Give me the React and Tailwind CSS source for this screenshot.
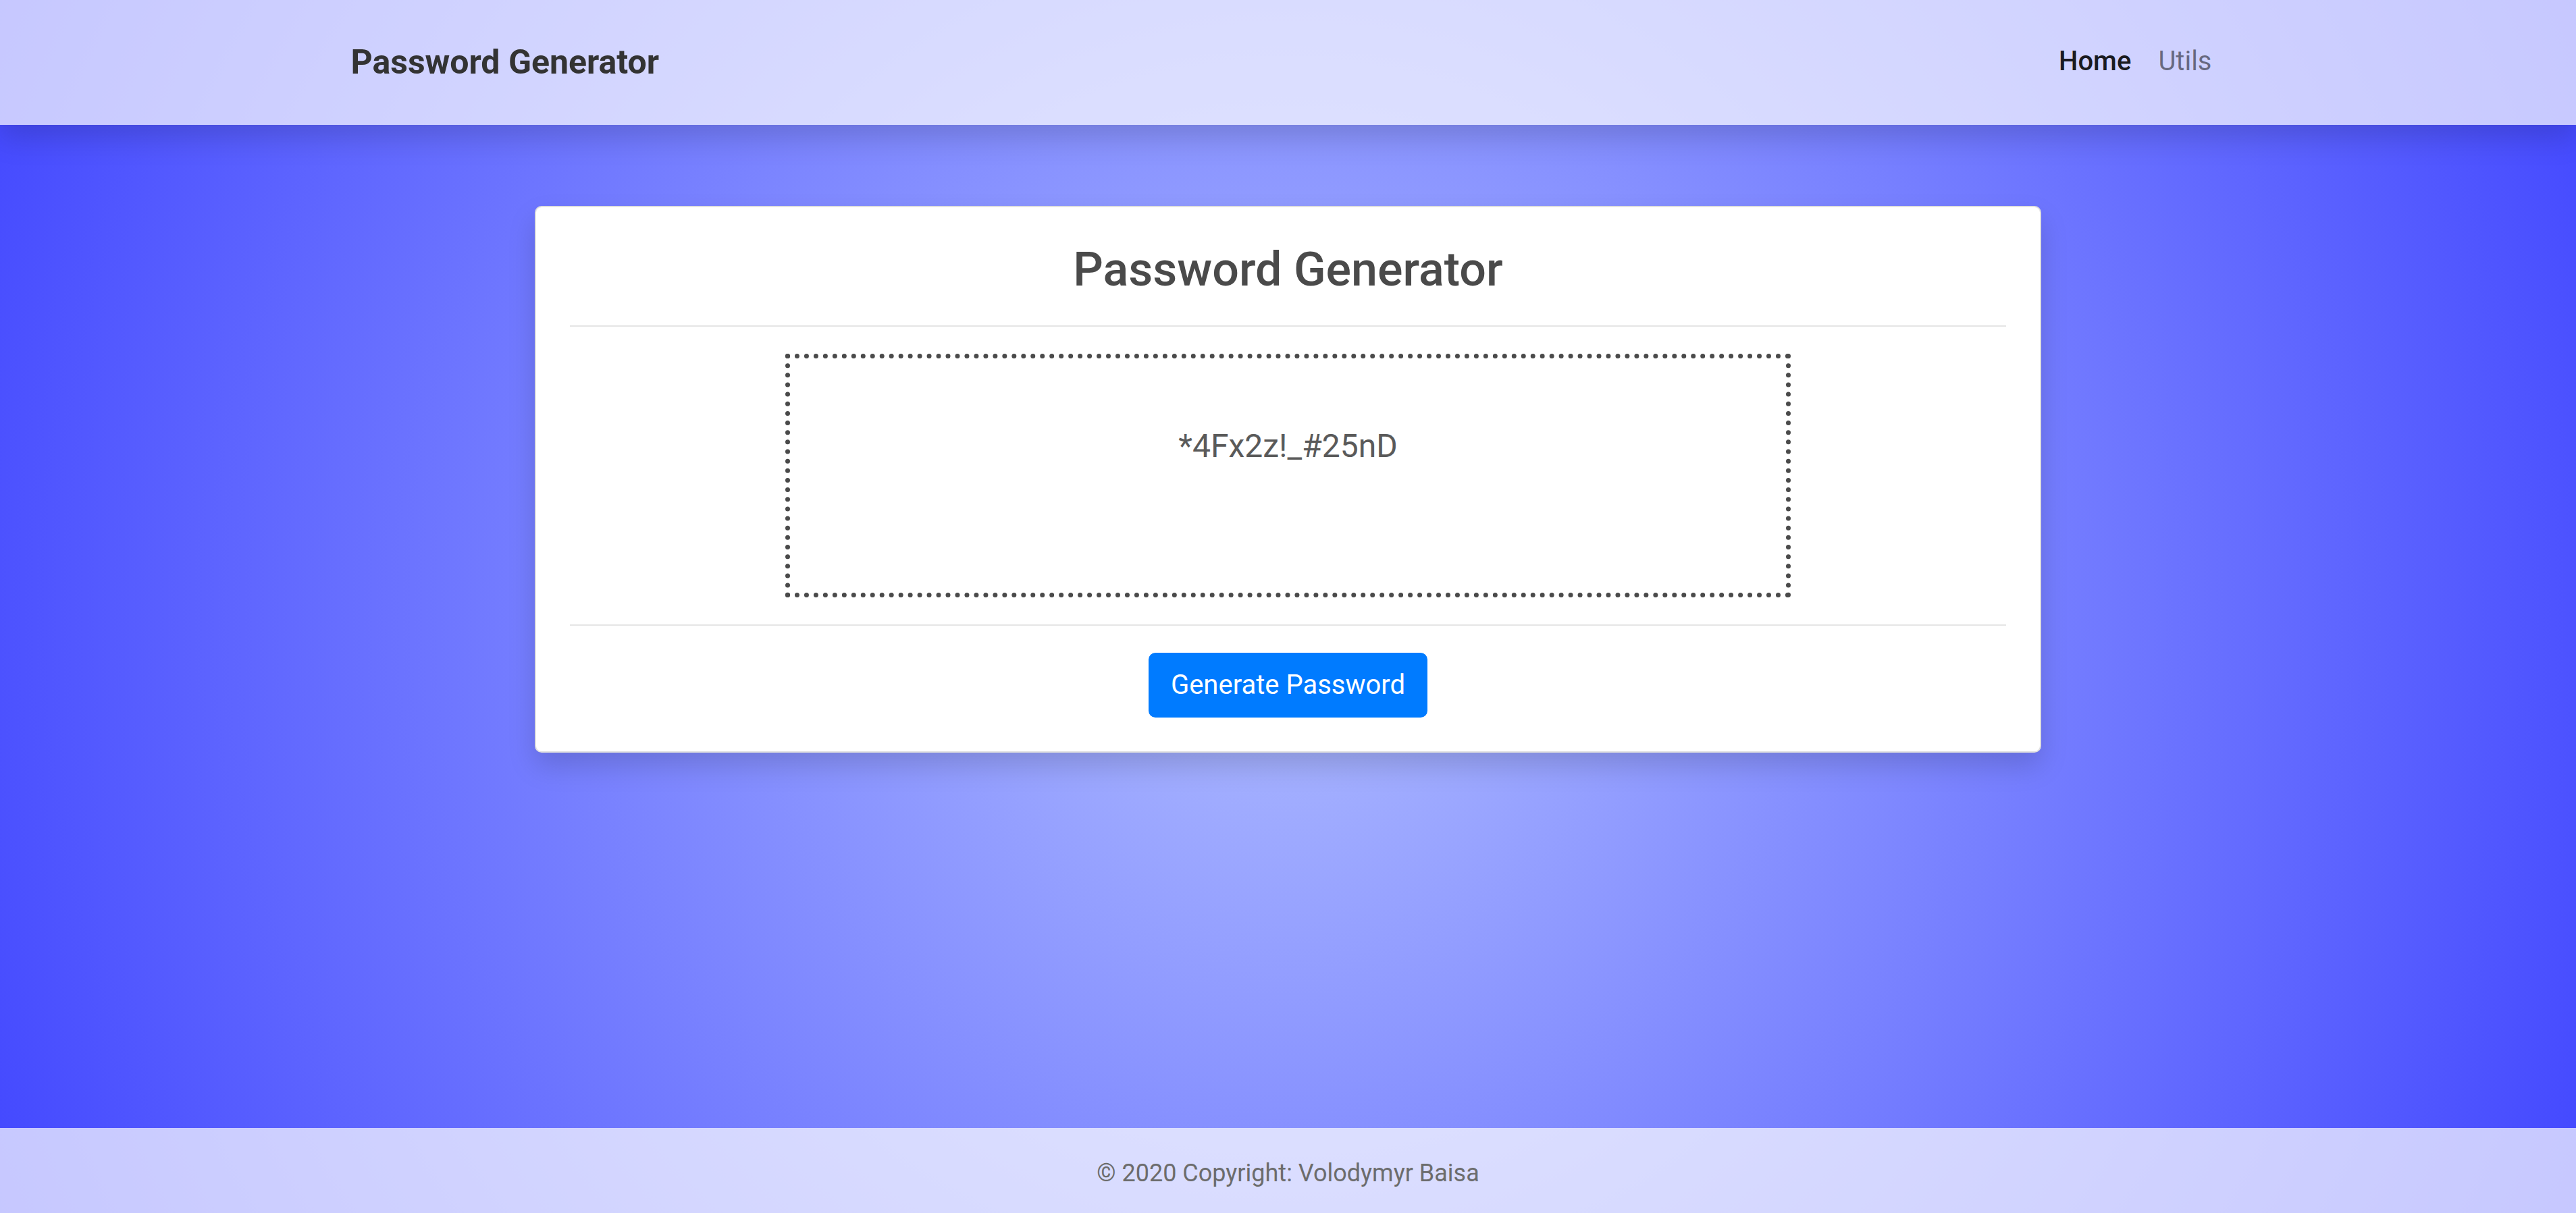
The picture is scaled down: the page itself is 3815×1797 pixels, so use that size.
export default function App() {
  return (
    <div className="flex min-h-screen flex-col bg-[radial-gradient(circle,#afbcff_0%,#4247ff_100%)] font-[Roboto,sans-serif] text-[40px] leading-[60px] text-[#4a4a4a]">
      <header className="bg-white/70 shadow-[0_20px_40px_rgba(0,0,0,0.15)]">
        <nav className="mx-auto flex min-h-[185px] max-w-[2850px] items-center justify-between px-[37px]">
          <a href="#home" className="text-[50px] leading-[75px] font-bold text-[#333]">
            Password Generator
          </a>
          <ul className="flex pb-1">
            <li>
              <a href="#home" aria-current="page" className="px-5 font-medium text-black/90">
                Home
              </a>
            </li>
            <li>
              <a href="#utils" className="px-5 text-black/50">
                Utils
              </a>
            </li>
          </ul>
        </nav>
      </header>

      <main className="flex grow flex-col items-center px-10 py-[120px]">
        <section className="w-full max-w-[2231px] rounded-[10px] border-2 border-[#dfdfdf] bg-white p-[50px] text-center shadow-[0_20px_40px_rgba(0,0,0,0.15)]">
          <h1 className="text-[70px] leading-[85px] font-medium">Password Generator</h1>
          <hr className="my-10 border-t-2 border-black/10" />
          <div className="mx-auto min-h-[361px] w-[70%] border-[7px] border-dotted border-[#4a4a4a] pt-[94px]">
            <p className="text-[48px] leading-[72px] text-[#5a5a5a]">*4Fx2z!_#25nD</p>
          </div>
          <hr className="my-10 border-t-2 border-black/10" />
          <button
            type="button"
            className="mx-auto block rounded-[10px] border-2 border-[#007bff] bg-[#007bff] px-[31px] py-4 text-white"
          >
            Generate Password
          </button>
        </section>
      </main>

      <footer className="bg-white/70 pt-10 pb-8 text-center text-[36px] leading-[54px] text-[#6c6c6c]">
        © 2020 Copyright: Volodymyr Baisa
      </footer>
    </div>
  );
}
